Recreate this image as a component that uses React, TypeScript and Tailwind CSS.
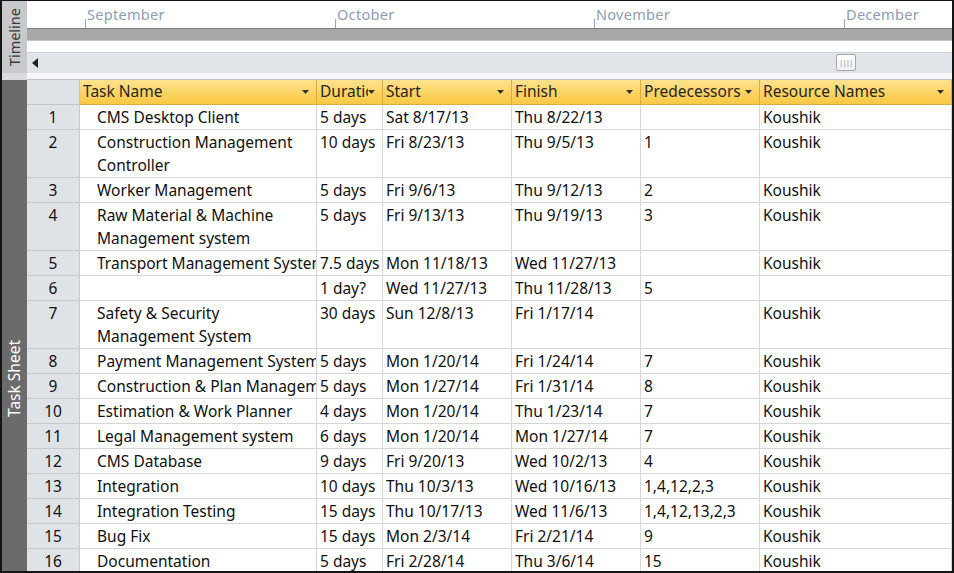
import React from "react";

type Row = {
  id: number;
  name: string[];
  dur: string;
  start: string;
  finish: string;
  pred: string;
  res: string;
};

const rows: Row[] = [
  { id: 1, name: ["CMS Desktop Client"], dur: "5 days", start: "Sat 8/17/13", finish: "Thu 8/22/13", pred: "", res: "Koushik" },
  { id: 2, name: ["Construction Management", "Controller"], dur: "10 days", start: "Fri 8/23/13", finish: "Thu 9/5/13", pred: "1", res: "Koushik" },
  { id: 3, name: ["Worker Management"], dur: "5 days", start: "Fri 9/6/13", finish: "Thu 9/12/13", pred: "2", res: "Koushik" },
  { id: 4, name: ["Raw Material & Machine", "Management system"], dur: "5 days", start: "Fri 9/13/13", finish: "Thu 9/19/13", pred: "3", res: "Koushik" },
  { id: 5, name: ["Transport Management System"], dur: "7.5 days", start: "Mon 11/18/13", finish: "Wed 11/27/13", pred: "", res: "Koushik" },
  { id: 6, name: [""], dur: "1 day?", start: "Wed 11/27/13", finish: "Thu 11/28/13", pred: "5", res: "" },
  { id: 7, name: ["Safety & Security", "Management System"], dur: "30 days", start: "Sun 12/8/13", finish: "Fri 1/17/14", pred: "", res: "Koushik" },
  { id: 8, name: ["Payment Management System"], dur: "5 days", start: "Mon 1/20/14", finish: "Fri 1/24/14", pred: "7", res: "Koushik" },
  { id: 9, name: ["Construction & Plan Management"], dur: "5 days", start: "Mon 1/27/14", finish: "Fri 1/31/14", pred: "8", res: "Koushik" },
  { id: 10, name: ["Estimation & Work Planner"], dur: "4 days", start: "Mon 1/20/14", finish: "Thu 1/23/14", pred: "7", res: "Koushik" },
  { id: 11, name: ["Legal Management system"], dur: "6 days", start: "Mon 1/20/14", finish: "Mon 1/27/14", pred: "7", res: "Koushik" },
  { id: 12, name: ["CMS Database"], dur: "9 days", start: "Fri 9/20/13", finish: "Wed 10/2/13", pred: "4", res: "Koushik" },
  { id: 13, name: ["Integration"], dur: "10 days", start: "Thu 10/3/13", finish: "Wed 10/16/13", pred: "1,4,12,2,3", res: "Koushik" },
  { id: 14, name: ["Integration Testing"], dur: "15 days", start: "Thu 10/17/13", finish: "Wed 11/6/13", pred: "1,4,12,13,2,3", res: "Koushik" },
  { id: 15, name: ["Bug Fix"], dur: "15 days", start: "Mon 2/3/14", finish: "Fri 2/21/14", pred: "9", res: "Koushik" },
  { id: 16, name: ["Documentation"], dur: "5 days", start: "Fri 2/28/14", finish: "Thu 3/6/14", pred: "15", res: "Koushik" },
];

const months = [
  { label: "September", w: "w-[250px]" },
  { label: "October", w: "w-[259px]" },
  { label: "November", w: "w-[250px]" },
  { label: "December", w: "w-[120px]" },
];

function Arrow() {
  return (
    <svg width="7" height="4" viewBox="0 0 7 4" className="shrink-0">
      <path d="M0 0 H7 L3.5 4 Z" fill="#333" />
    </svg>
  );
}

function HeaderCell({ label }: { label: string }) {
  return (
    <div className="flex items-center border-r border-b border-[#d9ad44] pl-[3px] pr-[7px] overflow-hidden">
      <span className="flex-1 overflow-hidden whitespace-nowrap text-[#262626]">{label}</span>
      <Arrow />
    </div>
  );
}

function Cell({ lines, indent = false }: { lines: string[]; indent?: boolean }) {
  return (
    <div
      className={`border-r border-b border-[#d6d6d6] pt-[1px] overflow-hidden ${indent ? "pl-[17px]" : "pl-[3px]"}`}
    >
      {lines.map((l, i) => (
        <div key={i} className="whitespace-nowrap overflow-hidden leading-[23px] h-[23px]">
          {l}
        </div>
      ))}
    </div>
  );
}

export default function App() {
  return (
    <div
      className="w-[954px] h-[573px] overflow-hidden bg-white border-l-2 border-r-2 border-b-2 border-t border-[#151515] flex flex-col text-[15.5px] text-[#111]"
      style={{ fontFamily: '"Noto Sans", "Open Sans", sans-serif' }}
    >
      {/* Timeline section */}
      <div className="flex h-[72px] shrink-0">
        <div className="w-[25px] shrink-0 bg-[#c7c9cc] flex items-center justify-center">
          <span className="[writing-mode:vertical-rl] rotate-180 text-[14.5px] text-[#3a3a3a] leading-none">Timeline</span>
        </div>
        <div className="flex-1 flex flex-col">
          <div className="h-[27px] flex items-end pl-[58px] bg-white">
            {months.map((m) => (
              <div key={m.label} className={`${m.w} h-full relative shrink-0`}>
                <span className="absolute left-0 bottom-0 h-[9px] w-px bg-[#9aa7b8]" />
                <span className="absolute left-[2px] top-[3px] text-[14.5px] text-[#8d9db2] tracking-[0.3px]">{m.label}</span>
              </div>
            ))}
          </div>
          <div className="h-[13px] bg-[#a8a8a8] border-t border-[#7e7e7e] border-b border-b-[#c4c4c4]" />
          <div className="h-[11px] bg-white" />
          <div className="h-[21px] bg-[#e1e5ea] border-t border-[#cfd3d8] flex items-center pl-[5px] relative">
            <svg width="6" height="10" viewBox="0 0 6 10">
              <path d="M6 0 V10 L0 5 Z" fill="#222" />
            </svg>
            <div className="absolute left-[809px] top-[1px] w-[20px] h-[17px] bg-gradient-to-b from-white to-[#eef0f2] border border-[#a4a9af] rounded-[2px] flex items-center justify-center">
              <span className="text-[7px] leading-none text-[#888] tracking-[-0.5px]">||||</span>
            </div>
          </div>
        </div>
      </div>

      {/* Separator */}
      <div className="h-[7px] shrink-0 flex">
        <div className="w-[25px] bg-[#d9dbdd]" />
        <div className="flex-1 bg-[#f5f5f5] border-b border-[#c2c2c2]" />
      </div>

      {/* Task sheet */}
      <div className="flex flex-1 min-h-0">
        <div className="w-[25px] shrink-0 bg-[#6b6b6b] flex flex-col items-center">
          <span className="mt-[260px] [writing-mode:vertical-rl] rotate-180 text-[15.5px] text-white leading-none">Task Sheet</span>
        </div>
        <div className="flex-1 overflow-hidden">
          <div className="grid grid-cols-[53px_237px_66px_129px_129px_119px_1fr] auto-rows-min">
            <div className="h-[25px] bg-[#dfe3e8] border-r border-b border-[#c3c7cc]" />
            {["Task Name", "Duration", "Start", "Finish", "Predecessors", "Resource Names"].map((h) => (
              <div key={h} className="h-[25px] bg-gradient-to-b from-[#fee38f] via-[#fcd463] to-[#f8c840] grid">
                <HeaderCell label={h} />
              </div>
            ))}
            {rows.map((r) => (
              <React.Fragment key={r.id}>
                <div className="bg-[#dfe3e8] border-r border-b border-[#c6cacf] text-center leading-[23px] pt-[1px] text-[#111]">
                  {r.id}
                </div>
                <Cell lines={r.name} indent />
                <Cell lines={[r.dur]} />
                <Cell lines={[r.start]} />
                <Cell lines={[r.finish]} />
                <Cell lines={[r.pred]} />
                <Cell lines={[r.res]} />
              </React.Fragment>
            ))}
          </div>
        </div>
      </div>
    </div>
  );
}
